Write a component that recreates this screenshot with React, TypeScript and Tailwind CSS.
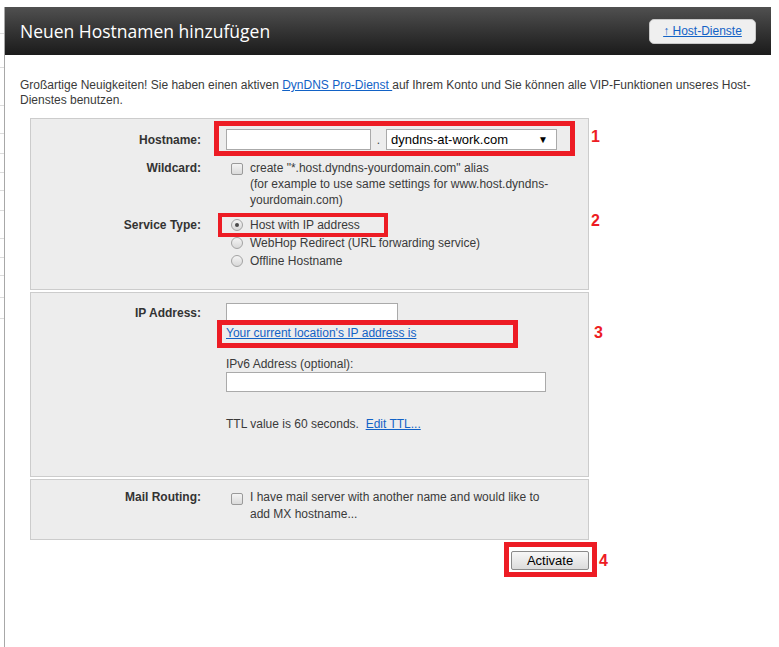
import React from "react";

const sideLines = [33, 67, 105, 133, 153, 172, 190, 210, 238, 257, 275, 297, 318];

function Checkbox() {
  return (
    <span className="inline-block w-[12px] h-[12px] shrink-0 rounded-[2px] border border-[#9a9a9a] bg-gradient-to-b from-[#f4f4f4] to-[#dadada]" />
  );
}

function Radio({ checked }: { checked?: boolean }) {
  return (
    <span className="flex items-center justify-center w-[12px] h-[12px] shrink-0 rounded-full border border-[#a3a3a3] bg-gradient-to-b from-[#f4f4f4] to-[#d8d8d8]">
      {checked ? <span className="block w-[4px] h-[4px] rounded-full bg-[#4a4a4a]" /> : null}
    </span>
  );
}

function Num({ n, className }: { n: string; className: string }) {
  return (
    <span className={"absolute text-[16px] font-bold leading-[18px] text-[#ed1c24] " + className}>{n}</span>
  );
}

export default function App() {
  return (
    <div className="flex min-h-[647px] bg-white font-['Liberation_Sans',Arial,sans-serif] text-[12px] text-[#3a3a3a]">
      <div className="relative w-[4px] shrink-0">
        {sideLines.map((y) => (
          <div key={y} className="absolute left-0 w-[4px] h-px bg-[#dcdcdc]" style={{ top: y }} />
        ))}
      </div>
      <div className="mt-[7px] w-[767px] border-l border-[#a8a8a8]">
        <div className="flex h-[48px] items-center justify-between bg-gradient-to-b from-[#505050] to-[#1b1b1b] pl-[15px] pr-[15px]">
          <h1 className="font-['Open_Sans',sans-serif] text-[17.5px] leading-[22px] text-white">Neuen Hostnamen hinzufügen</h1>
          <a className="flex h-[25px] w-[107px] items-center justify-center rounded-[5px] border border-[#c8c8c8] bg-[#efefef] text-[12px] text-[#1262c6] underline">
            ↑ Host-Dienste
          </a>
        </div>

        <div className="pl-[15px] pt-[23px]">
          <p className="leading-[15px] text-[#3a3a3a]">
            Großartige Neuigkeiten! Sie haben einen aktiven <a className="text-[#1262c6] underline">DynDNS Pro-Dienst </a> auf Ihrem Konto und Sie können alle VIP-Funktionen unseres Host-
            <br />
            Dienstes benutzen.
          </p>
        </div>

        <div className="ml-[25px] mt-[10px] w-[559px]">
          {/* Panel 1 */}
          <div className="relative border border-[#cccccc] bg-[#ededed] pt-[10px] pb-[19px]">
            <Num n="1" className="left-[560px] top-[9px]" />
            <Num n="2" className="left-[560px] top-[93px]" />
            <div className="grid grid-cols-[170px_1fr] gap-x-[25px]">
              <div className="flex h-[21px] items-center justify-end font-bold text-[#333]">Hostname:</div>
              <div className="relative flex h-[21px] items-center">
                <div className="absolute left-[-12px] top-[-8px] h-[35px] w-[361px] border-[5px] border-[#ed1c24]" />
                <input className="h-[21px] w-[145px] border border-[#aaaaaa] bg-white outline-none" />
                <span className="w-[15px] text-center text-[#444]">.</span>
                <div className="flex h-[21px] w-[171px] items-center justify-between border border-[#aaaaaa] bg-white pl-[4px] pr-[8px] text-[13px] text-black">
                  <span>dyndns-at-work.com</span>
                  <span className="text-[10px]">▼</span>
                </div>
              </div>

              <div className="mt-[10px] text-right font-bold leading-[16px] text-[#333]">Wildcard:</div>
              <div className="mt-[10px] flex">
                <span className="ml-[5px] mt-[2px]"><Checkbox /></span>
                <span className="ml-[7px] leading-[16px]">
                  create "*.host.dyndns-yourdomain.com" alias
                  <br />
                  (for example to use same settings for www.host.dyndns-
                  <br />
                  yourdomain.com)
                </span>
              </div>

              <div className="mt-[8px] text-right font-bold leading-[18px] text-[#333]">Service Type:</div>
              <div className="mt-[8px] flex flex-col">
                <div className="relative flex h-[18px] items-center">
                  <div className="absolute left-[-8px] top-[-3px] h-[24px] w-[170px] border-[4px] border-[#ed1c24]" />
                  <span className="ml-[5px]"><Radio checked /></span>
                  <span className="ml-[7px]">Host with IP address</span>
                </div>
                <div className="flex h-[18px] items-center">
                  <span className="ml-[5px]"><Radio /></span>
                  <span className="ml-[7px]">WebHop Redirect (URL forwarding service)</span>
                </div>
                <div className="flex h-[18px] items-center">
                  <span className="ml-[5px]"><Radio /></span>
                  <span className="ml-[7px]">Offline Hostname</span>
                </div>
              </div>
            </div>
          </div>

          {/* Panel 2 */}
          <div className="relative mt-[2px] h-[185px] border border-[#cccccc] bg-[#ededed] pt-[10px]">
            <Num n="3" className="left-[563px] top-[31px]" />
            <div className="grid grid-cols-[170px_1fr] gap-x-[25px]">
              <div className="flex h-[20px] items-center justify-end font-bold text-[#333]">IP Address:</div>
              <div className="relative flex flex-col">
                <input className="h-[20px] w-[172px] border border-[#aaaaaa] bg-white outline-none" />
                <div className="relative mt-[2px] leading-[16px]">
                  <div className="absolute left-[-9px] top-[-5px] h-[28px] w-[301px] border-[5px] border-[#ed1c24]" />
                  <a className="relative text-[#1262c6] underline">Your current location's IP address is</a>
                </div>
                <div className="mt-[15px] leading-[16px]">IPv6 Address (optional):</div>
                <input className="h-[20px] w-[320px] border border-[#aaaaaa] bg-white outline-none" />
                <div className="mt-[24px] leading-[16px]">
                  TTL value is 60 seconds.&nbsp;&nbsp;<a className="text-[#1262c6] underline">Edit TTL...</a>
                </div>
              </div>
            </div>
          </div>

          {/* Panel 3 */}
          <div className="mt-[2px] border border-[#cccccc] bg-[#ededed] pt-[9px] pb-[16px]">
            <div className="grid grid-cols-[170px_1fr] gap-x-[25px]">
              <div className="text-right font-bold leading-[17px] text-[#333]">Mail Routing:</div>
              <div className="flex">
                <span className="ml-[5px] mt-[3px]"><Checkbox /></span>
                <span className="ml-[7px] leading-[17px]">
                  I have mail server with another name and would like to
                  <br />
                  add MX hostname...
                </span>
              </div>
            </div>
          </div>

          <div className="mt-[11px] flex justify-end">
            <div className="relative">
              <div className="absolute left-[-7px] top-[-9px] h-[35px] w-[93px] border-[5px] border-[#ed1c24]" />
              <span className="absolute left-[88px] top-[1px] text-[16px] font-bold leading-[18px] text-[#ed1c24]">4</span>
              <button className="relative flex h-[19px] w-[78px] items-center justify-center rounded-[2px] border border-[#8a8a8a] bg-gradient-to-b from-[#f7f7f7] to-[#dcdcdc] font-['Liberation_Sans',Arial,sans-serif] text-[13px] text-black">
                Activate
              </button>
            </div>
          </div>
        </div>
      </div>
    </div>
  );
}
